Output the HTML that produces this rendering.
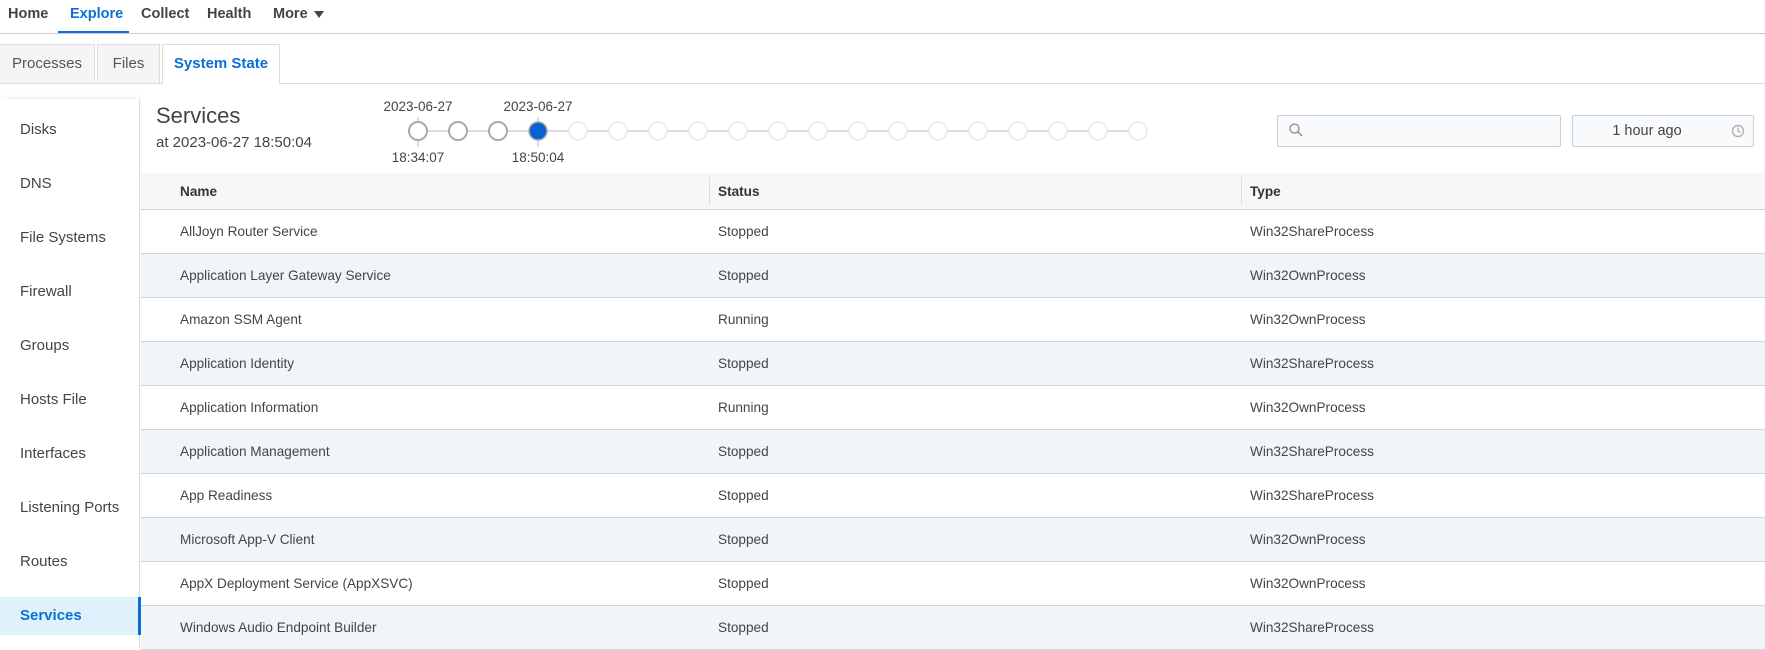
<!DOCTYPE html>
<html><head><meta charset="utf-8"><style>
*{box-sizing:border-box;margin:0;padding:0}
body{width:1765px;height:649px;overflow:hidden;background:#fff;font-family:"Liberation Sans",sans-serif;color:#333;position:relative}
.a{position:absolute;white-space:nowrap}
.nav{font-size:14.5px;font-weight:bold;color:#444;top:6px}
.tab{position:absolute;top:44px;height:39px;border:1px solid #ddd;border-bottom:none;background:#f5f5f5;font-size:15px;color:#555;text-align:center;line-height:38px}
.side{font-size:15px;color:#444;left:20px}
.row{position:absolute;left:141px;width:1624px;height:44px;border-bottom:1px solid #cfd8e0;font-size:13.6px;color:#444}
.row span{position:absolute;top:14px}
.alt{background:#f2f5f8}
</style></head><body>
<div class="a nav" style="left:8px">Home</div>
<div class="a nav" style="left:70px;color:#0a6fd8">Explore</div>
<div class="a" style="left:58px;top:31px;width:71px;height:3px;background:#0a6fd8"></div>
<div class="a nav" style="left:141px">Collect</div>
<div class="a nav" style="left:207px">Health</div>
<div class="a nav" style="left:273px">More</div>
<div class="a" style="left:314px;top:11px;width:0;height:0;border-left:5px solid transparent;border-right:5px solid transparent;border-top:7px solid #444"></div>
<div class="a" style="left:0;top:33px;width:1765px;height:1px;background:#ccc"></div>

<div class="tab" style="left:-1px;width:96px">Processes</div>
<div class="tab" style="left:97px;width:63px">Files</div>
<div class="tab" style="left:162px;width:118px;background:#fff;color:#0a6fd8;font-weight:bold;height:40px">System State</div>
<div class="a" style="left:0;top:83px;width:162px;height:1px;background:#ddd"></div>
<div class="a" style="left:280px;top:83px;width:1485px;height:1px;background:#ddd"></div>

<div class="a" style="left:0;top:99px;width:140px;height:550px;border-right:1px solid #ddd;box-shadow:0 -2px 4px rgba(0,0,0,0.05)"></div>
<div class="a side" style="top:121px">Disks</div>
<div class="a side" style="top:175px">DNS</div>
<div class="a side" style="top:229px">File Systems</div>
<div class="a side" style="top:283px">Firewall</div>
<div class="a side" style="top:337px">Groups</div>
<div class="a side" style="top:391px">Hosts File</div>
<div class="a side" style="top:445px">Interfaces</div>
<div class="a side" style="top:499px">Listening Ports</div>
<div class="a side" style="top:553px">Routes</div>
<div class="a" style="left:0;top:597px;width:141px;height:38px;background:#dff2fc;border-right:3px solid #0a6fd8"></div>
<div class="a side" style="top:607px;color:#0a6fd8;font-weight:bold">Services</div>

<div class="a" style="left:156px;top:103px;font-size:22px;color:#444">Services</div>
<div class="a" style="left:156px;top:134px;font-size:15px;color:#444">at 2023-06-27 18:50:04</div>

<svg class="a" style="left:0;top:0" width="1765" height="172">
<line x1="418" y1="131" x2="1138" y2="131" stroke="#bbb" stroke-width="1"/>
<line x1="418" y1="117" x2="418" y2="147" stroke="#bbb"/>
<line x1="538" y1="117" x2="538" y2="147" stroke="#bbb"/>
<g fill="#fff" stroke="#e8e8e8" stroke-width="1.5">
<circle cx="578" cy="131" r="9"/><circle cx="618" cy="131" r="9"/><circle cx="658" cy="131" r="9"/><circle cx="698" cy="131" r="9"/><circle cx="738" cy="131" r="9"/><circle cx="778" cy="131" r="9"/><circle cx="818" cy="131" r="9"/><circle cx="858" cy="131" r="9"/><circle cx="898" cy="131" r="9"/><circle cx="938" cy="131" r="9"/><circle cx="978" cy="131" r="9"/><circle cx="1018" cy="131" r="9"/><circle cx="1058" cy="131" r="9"/><circle cx="1098" cy="131" r="9"/><circle cx="1138" cy="131" r="9"/>
</g>
<g fill="#fff" stroke="#aaa" stroke-width="2">
<circle cx="418" cy="131" r="9"/><circle cx="458" cy="131" r="9"/><circle cx="498" cy="131" r="9"/>
</g>
<circle cx="538" cy="131" r="9" fill="#0a63d3" stroke="#aaa" stroke-width="1.5"/>
<g font-family="Liberation Sans" font-size="13.5" fill="#444" text-anchor="middle">
<text x="418" y="111">2023-06-27</text><text x="538" y="111">2023-06-27</text>
<text x="418" y="162">18:34:07</text><text x="538" y="162">18:50:04</text>
</g>
</svg>

<div class="a" style="left:1277px;top:115px;width:284px;height:32px;border:1px solid #c3d2de;background:#f8fafc;border-radius:2px"></div>
<svg class="a" style="left:1288px;top:122px" width="16" height="16"><circle cx="6.5" cy="6.5" r="4.5" fill="none" stroke="#888" stroke-width="1.3"/><line x1="10" y1="10" x2="14" y2="14" stroke="#888" stroke-width="1.3"/></svg>
<div class="a" style="left:1572px;top:115px;width:182px;height:32px;border:1px solid #c3d2de;background:#f8fafc;border-radius:2px"></div>
<div class="a" style="left:1572px;top:123px;width:150px;text-align:center;font-size:14.5px;color:#444">1 hour ago</div>
<svg class="a" style="left:1731px;top:124px" width="14" height="14"><circle cx="7" cy="7" r="5.5" fill="none" stroke="#aaa" stroke-width="1.2"/><path d="M7 3.5V7l2.3 1.5" fill="none" stroke="#aaa" stroke-width="1.2"/></svg>

<div class="a" style="left:141px;top:173px;width:1624px;height:37px;background:#f7f7f7;border-bottom:1px solid #ccd5dd"></div>
<div class="a" style="left:709px;top:177px;width:1px;height:28px;background:#ddd"></div>
<div class="a" style="left:1241px;top:177px;width:1px;height:28px;background:#ddd"></div>
<div class="a" style="left:180px;top:184px;font-size:13.6px;font-weight:bold;color:#333">Name</div>
<div class="a" style="left:718px;top:184px;font-size:13.6px;font-weight:bold;color:#333">Status</div>
<div class="a" style="left:1250px;top:184px;font-size:13.6px;font-weight:bold;color:#333">Type</div>

<div class="row" style="top:210px"><span style="left:39px">AllJoyn Router Service</span><span style="left:577px">Stopped</span><span style="left:1109px">Win32ShareProcess</span></div>
<div class="row alt" style="top:254px"><span style="left:39px">Application Layer Gateway Service</span><span style="left:577px">Stopped</span><span style="left:1109px">Win32OwnProcess</span></div>
<div class="row" style="top:298px"><span style="left:39px">Amazon SSM Agent</span><span style="left:577px">Running</span><span style="left:1109px">Win32OwnProcess</span></div>
<div class="row alt" style="top:342px"><span style="left:39px">Application Identity</span><span style="left:577px">Stopped</span><span style="left:1109px">Win32ShareProcess</span></div>
<div class="row" style="top:386px"><span style="left:39px">Application Information</span><span style="left:577px">Running</span><span style="left:1109px">Win32OwnProcess</span></div>
<div class="row alt" style="top:430px"><span style="left:39px">Application Management</span><span style="left:577px">Stopped</span><span style="left:1109px">Win32ShareProcess</span></div>
<div class="row" style="top:474px"><span style="left:39px">App Readiness</span><span style="left:577px">Stopped</span><span style="left:1109px">Win32ShareProcess</span></div>
<div class="row alt" style="top:518px"><span style="left:39px">Microsoft App-V Client</span><span style="left:577px">Stopped</span><span style="left:1109px">Win32OwnProcess</span></div>
<div class="row" style="top:562px"><span style="left:39px">AppX Deployment Service (AppXSVC)</span><span style="left:577px">Stopped</span><span style="left:1109px">Win32OwnProcess</span></div>
<div class="row alt" style="top:606px"><span style="left:39px">Windows Audio Endpoint Builder</span><span style="left:577px">Stopped</span><span style="left:1109px">Win32ShareProcess</span></div>
</body></html>
